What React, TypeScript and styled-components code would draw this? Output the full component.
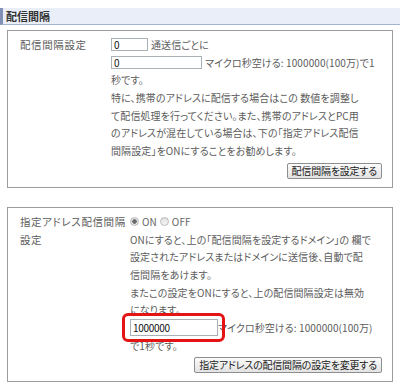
import React from "react";
import styled, { createGlobalStyle } from "styled-components";

const GlobalStyle = createGlobalStyle`
	body {
		margin: 0;
		background: #fff;
		font-family: "Noto Sans CJK JP", "Noto Sans", sans-serif;
		font-size: 10px;
		color: #5c5c5c;
		font-feature-settings: "palt";
	}
`;

const Page = styled.div`
	width: 400px;
	padding-top: 8px;
`;

const SectionHeader = styled.h2`
	margin: 0;
	height: 16px;
	line-height: 16px;
	padding-left: 3px;
	background: #e9eef8;
	border-left: 3px solid #8190b6;
	border-bottom: 1px solid #a5b2d4;
	font-size: 11px;
	font-weight: bold;
	color: #333;
`;

const Panel = styled.div<{ $gap: number }>`
	margin: ${(p) => p.$gap}px 7px 0 7px;
	border: 1px solid #9c9c9c;
	padding: 5px 10px 8px 12px;
`;

const FormRow = styled.div<{ $labelWidth: number }>`
	display: grid;
	grid-template-columns: ${(p) => p.$labelWidth}px 1fr;
	line-height: 17.7px;
`;

const Label = styled.div`
	font-size: 10.5px;
	letter-spacing: 0.6px;
`;

const Content = styled.div`
	white-space: nowrap;
	letter-spacing: 0.1px;
`;

const Line = styled.div`
	display: flex;
	align-items: center;
	height: 17.7px;
`;

const TextInput = styled.input<{ $width: number; $height?: number }>`
	box-sizing: border-box;
	width: ${(p) => p.$width}px;
	height: ${(p) => p.$height ?? 13}px;
	margin: 0 3px 0 0;
	padding: 0 2px;
	border: 1px solid #a9b0b6;
	background: #fff;
	font-family: "Noto Sans CJK JP", sans-serif;
	font-size: 10px;
	letter-spacing: -0.3px;
	color: #111;
	outline: none;
`;

const ButtonBar = styled.div`
	display: flex;
	justify-content: flex-end;
	margin-top: 3px;
`;

const Button = styled.button`
	height: 16px;
	padding: 0 4px;
	border: 1px solid #8e8e8e;
	border-radius: 2px;
	background: linear-gradient(#fbfbfb, #e3e3e3);
	font-family: "Noto Sans CJK JP", sans-serif;
	font-feature-settings: "palt";
	font-size: 10px;
	letter-spacing: -0.2px;
	line-height: 14px;
	color: #222;
`;

const RadioOption = styled.label`
	display: inline-flex;
	align-items: center;
	margin-right: 3px;
	color: #666;
`;

const RadioDot = styled.span<{ $checked?: boolean }>`
	display: inline-block;
	box-sizing: border-box;
	width: 9px;
	height: 9px;
	margin: 0 3px 0 6px;
	border-radius: 50%;
	border: 1px solid #b9b9b9;
	background: ${(p) =>
		p.$checked
			? "radial-gradient(circle, #6b6b6b 0 2px, #e8e8e8 2.5px)"
			: "linear-gradient(#e0e0e0, #f6f6f6)"};
`;

const Marked = styled.span`
	position: relative;
	display: inline-flex;
	&::after {
		content: "";
		position: absolute;
		left: -8px;
		right: -7px;
		top: -6px;
		bottom: -6px;
		border: 3px solid #e41414;
		border-radius: 6px;
	}
`;

export default function App() {
	return (
		<Page>
			<GlobalStyle />
			<SectionHeader>配信間隔</SectionHeader>

			<Panel $gap={5}>
				<FormRow $labelWidth={91}>
					<Label>配信間隔設定</Label>
					<Content>
						<Line>
							<TextInput $width={37} defaultValue="0" />
							通送信ごとに
						</Line>
						<Line>
							<TextInput $width={91} defaultValue="0" />
							マイクロ秒空ける: 1000000(100万)で1
						</Line>
						<Line>秒です。</Line>
						<Line>特に、携帯のアドレスに配信する場合はこの 数値を調整し</Line>
						<Line>て配信処理を行ってください。また、携帯のアドレスとPC用</Line>
						<Line>のアドレスが混在している場合は、下の「指定アドレス配信</Line>
						<Line>間隔設定」をONにすることをお勧めします。</Line>
					</Content>
				</FormRow>
				<ButtonBar>
					<Button>配信間隔を設定する</Button>
				</ButtonBar>
			</Panel>

			<Panel $gap={19}>
				<FormRow $labelWidth={110}>
					<Label>
						指定アドレス配信間隔
						<br />
						設定
					</Label>
					<Content>
						<Line style={{ marginLeft: -6 }}>
							<RadioOption>
								<RadioDot $checked />
								ON
							</RadioOption>
							<RadioOption>
								<RadioDot style={{ marginLeft: 0 }} />
								OFF
							</RadioOption>
						</Line>
						<Line>ONにすると、上の「配信間隔を設定するドメイン」の 欄で</Line>
						<Line>設定されたアドレスまたはドメインに送信後、自動で配</Line>
						<Line>信間隔をあけます。</Line>
						<Line>またこの設定をONにすると、上の配信間隔設定は無効</Line>
						<Line>になります。</Line>
						<Line>
							<Marked>
								<TextInput $width={88} $height={17} defaultValue="1000000" style={{ marginRight: 0 }} />
							</Marked>
							マイクロ秒空ける: 1000000(100万)
						</Line>
						<Line>で1秒です。</Line>
					</Content>
				</FormRow>
				<ButtonBar>
					<Button>指定アドレスの配信間隔の設定を変更する</Button>
				</ButtonBar>
			</Panel>
		</Page>
	);
}
